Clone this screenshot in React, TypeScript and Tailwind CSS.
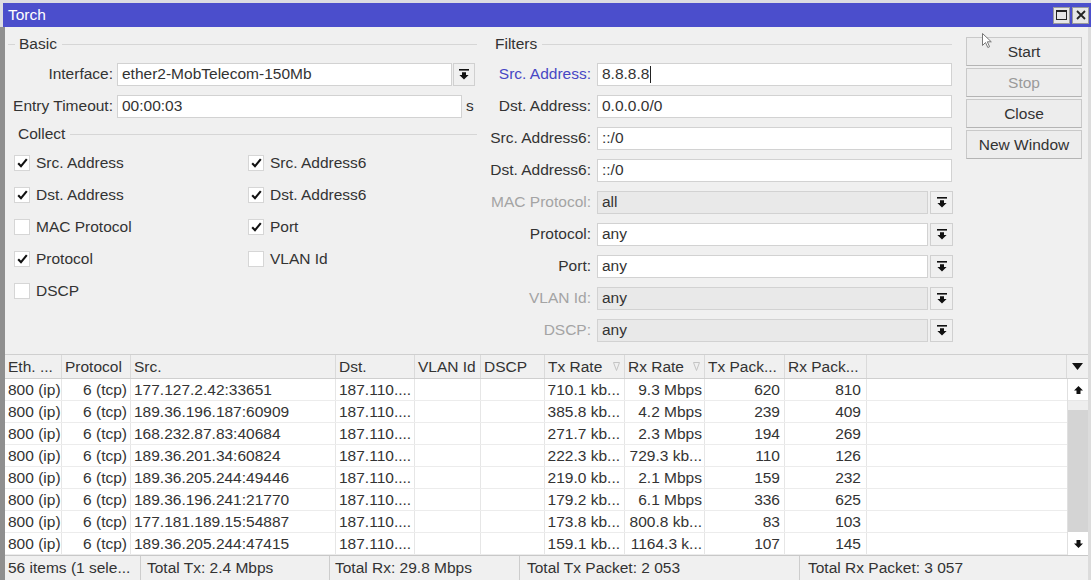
import React from "react";

const FONT = "font-['Liberation_Sans',Arial,sans-serif]";

function DropIcon() {
  return (
    <svg width="10" height="11" viewBox="0 0 10 11">
      <rect x="0" y="0" width="10" height="1.6" fill="#111" />
      <path d="M3 3.2h4v2.8h2.6L5 10.6 0.4 6H3z" fill="#111" />
    </svg>
  );
}

function DropBtn({ w }: { w: string }) {
  return (
    <div className={`${w} h-[23px] border border-[#d0d0d0] bg-[#f0f0f0] flex items-center justify-center`}>
      <DropIcon />
    </div>
  );
}

function Input({
  w,
  value,
  disabled,
  cursor,
}: {
  w: string;
  value: string;
  disabled?: boolean;
  cursor?: boolean;
}) {
  return (
    <div
      className={`${w} h-[23px] border border-[#d2d2d2] ${
        disabled ? "bg-[#e9e9e9]" : "bg-white"
      } flex items-center pl-[4px] whitespace-nowrap overflow-hidden`}
    >
      <span>{value}</span>
      {cursor && <span className="w-px h-[17px] bg-[#222] ml-[1px]" />}
    </div>
  );
}

function GroupTitle({ label, lead, pl, w }: { label: string; lead?: boolean; pl: string; w: string }) {
  return (
    <div className={`h-[20px] flex items-center ${pl} ${w}`}>
      {lead && <div className="w-[7px] h-px bg-[#d6d6d6] mr-[4px]" />}
      <span>{label}</span>
      <div className="flex-1 h-px bg-[#d6d6d6] ml-[5px]" />
    </div>
  );
}

function Check({ on }: { on: boolean }) {
  return (
    <div className="w-[16px] h-[16px] border border-[#d6d6d6] bg-white flex items-center justify-center">
      {on && (
        <svg width="11" height="10" viewBox="0 0 11 10">
          <path d="M1.2 5.2l2.8 3L9.8 1.2" stroke="#111" strokeWidth="2.1" fill="none" />
        </svg>
      )}
    </div>
  );
}

function CheckItem({ on, label }: { on: boolean; label: string }) {
  return (
    <div className="h-[32px] flex items-center">
      <Check on={on} />
      <span className="ml-[6px]">{label}</span>
    </div>
  );
}

type FRow = {
  label: string;
  value: string;
  kind: "input" | "drop";
  disabled?: boolean;
  blue?: boolean;
  cursor?: boolean;
};

const filterRows: FRow[] = [
  { label: "Src. Address:", value: "8.8.8.8", kind: "input", blue: true, cursor: true },
  { label: "Dst. Address:", value: "0.0.0.0/0", kind: "input" },
  { label: "Src. Address6:", value: "::/0", kind: "input" },
  { label: "Dst. Address6:", value: "::/0", kind: "input" },
  { label: "MAC Protocol:", value: "all", kind: "drop", disabled: true },
  { label: "Protocol:", value: "any", kind: "drop" },
  { label: "Port:", value: "any", kind: "drop" },
  { label: "VLAN Id:", value: "any", kind: "drop", disabled: true },
  { label: "DSCP:", value: "any", kind: "drop", disabled: true },
];

function Button({ label, disabled }: { label: string; disabled?: boolean }) {
  return (
    <div
      className={`w-[116px] h-[29px] border border-[#c9c9c9] border-b-[#b4b4b4] bg-[#ededed] flex items-center justify-center ${
        disabled ? "text-[#9a9a9a]" : "text-[#333]"
      }`}
    >
      {label}
    </div>
  );
}

const rows = [
  ["177.127.2.42:33651", "710.1 kb...", "9.3 Mbps", "620", "810"],
  ["189.36.196.187:60909", "385.8 kb...", "4.2 Mbps", "239", "409"],
  ["168.232.87.83:40684", "271.7 kb...", "2.3 Mbps", "194", "269"],
  ["189.36.201.34:60824", "222.3 kb...", "729.3 kb...", "110", "126"],
  ["189.36.205.244:49446", "219.0 kb...", "2.1 Mbps", "159", "232"],
  ["189.36.196.241:21770", "179.2 kb...", "6.1 Mbps", "336", "625"],
  ["177.181.189.15:54887", "173.8 kb...", "800.8 kb...", "83", "103"],
  ["189.36.205.244:47415", "159.1 kb...", "1164.3 k...", "107", "145"],
];

function SortMark() {
  return (
    <svg width="7" height="9" viewBox="0 0 7 9" className="ml-auto mr-[4px]">
      <path d="M0.5 0.5h6L3.5 8.5z" stroke="#c4c4c4" fill="none" strokeWidth="1" />
    </svg>
  );
}

function HCell({ w, children }: { w: string; children: React.ReactNode }) {
  return (
    <div className={`${w} h-full border-r border-[#dadada] flex items-center pl-[3px] whitespace-nowrap overflow-hidden`}>
      {children}
    </div>
  );
}

function Cell({ w, children, right, pr }: { w: string; children?: React.ReactNode; right?: boolean; pr?: string }) {
  return (
    <div
      className={`${w} h-full border-r border-[#e6e6e6] flex items-center whitespace-nowrap overflow-hidden ${
        right ? `justify-end ${pr ?? "pr-[3px]"}` : "pl-[3px]"
      }`}
    >
      {children}
    </div>
  );
}

export default function App() {
  return (
    <div className={`w-[1091px] h-[580px] bg-[#dcdce2] pt-[3px] flex flex-col overflow-hidden text-[15.5px] leading-none text-[#333] ${FONT}`}>
      {/* Title bar */}
      <div className="h-[24px] ml-[3px] bg-[#4b4ecc] flex items-center pl-[5px] pr-[2px]">
        <span className="text-white">Torch</span>
        <div className="ml-auto flex gap-[2px]">
          <div className="w-[17px] h-[17px] bg-[#e6e6e6] border border-[#9a9a9a] flex items-center justify-center">
            <div className="w-[11px] h-[10px] border border-[#222] border-t-[2px]" />
          </div>
          <div className="w-[17px] h-[17px] bg-[#e6e6e6] border border-[#9a9a9a] flex items-center justify-center">
            <svg width="10" height="10" viewBox="0 0 10 10">
              <path d="M1 1L9 9M9 1L1 9" stroke="#222" strokeWidth="1.8" />
            </svg>
          </div>
        </div>
      </div>

      {/* Body */}
      <div className="flex-1 flex flex-col bg-[#f0f0f0] border-l-[5px] border-l-[#8f8f8f] border-r-[3px] border-r-[#dcdcdc] relative">
        {/* Mouse pointer overlay */}
        <svg width="10" height="16" viewBox="0 0 10 16" className="absolute left-[977px] top-[6px]">
          <path d="M0.5 0.5V12.5L3.5 9.5L5.8 14.5L7.6 13.7L5.3 8.8H9.3Z" fill="white" stroke="#777" strokeWidth="1" />
        </svg>

        {/* Form area */}
        <div className="h-[327px] flex">
          {/* Left panel */}
          <div className="w-[473px] flex flex-col pt-[7px]">
            <GroupTitle label="Basic" lead pl="pl-[3px]" w="w-[472px]" />
            <div className="h-[32px] mt-[4px] flex items-center">
              <div className="w-[112px] text-right pr-[4px]">Interface:</div>
              <Input w="w-[335px]" value="ether2-MobTelecom-150Mb" />
              <div className="ml-[1px]">
                <DropBtn w="w-[22px]" />
              </div>
            </div>
            <div className="h-[32px] flex items-center">
              <div className="w-[112px] text-right pr-[4px] whitespace-nowrap">Entry Timeout:</div>
              <Input w="w-[345px]" value="00:00:03" />
              <span className="ml-[4px]">s</span>
            </div>
            <div className="mt-[2px]">
              <GroupTitle label="Collect" pl="pl-[13px]" w="w-[472px]" />
            </div>
            <div className="mt-[3px] flex">
              <div className="w-[243px] pl-[9px] flex flex-col">
                <CheckItem on label="Src. Address" />
                <CheckItem on label="Dst. Address" />
                <CheckItem on={false} label="MAC Protocol" />
                <CheckItem on label="Protocol" />
                <CheckItem on={false} label="DSCP" />
              </div>
              <div className="flex flex-col">
                <CheckItem on label="Src. Address6" />
                <CheckItem on label="Dst. Address6" />
                <CheckItem on label="Port" />
                <CheckItem on={false} label="VLAN Id" />
              </div>
            </div>
          </div>

          {/* Filters panel */}
          <div className="w-[471px] ml-[6px] flex flex-col pt-[7px]">
            <GroupTitle label="Filters" pl="pl-[11px]" w="w-[468px]" />
            <div className="mt-[4px] flex flex-col">
              {filterRows.map((r) => (
                <div key={r.label} className="h-[32px] flex items-center">
                  <div
                    className={`w-[113px] text-right pr-[6px] whitespace-nowrap ${
                      r.blue ? "text-[#4747c4]" : r.disabled ? "text-[#a4a4a4]" : "text-[#333]"
                    }`}
                  >
                    {r.label}
                  </div>
                  {r.kind === "input" ? (
                    <Input w="w-[355px]" value={r.value} cursor={r.cursor} />
                  ) : (
                    <>
                      <Input w="w-[331px]" value={r.value} disabled={r.disabled} />
                      <div className="ml-[2px]">
                        <DropBtn w="w-[23px]" />
                      </div>
                    </>
                  )}
                </div>
              ))}
            </div>
          </div>

          {/* Buttons */}
          <div className="ml-[11px] pt-[10px] flex flex-col gap-[2px]">
            <Button label="Start" />
            <Button label="Stop" disabled />
            <Button label="Close" />
            <Button label="New Window" />
          </div>
        </div>

        {/* Table header */}
        <div className="h-[25px] border-t border-b border-[#cfcfcf] bg-[#f0f0f0] flex">
          <HCell w="w-[57px]">Eth. ...</HCell>
          <HCell w="w-[69px]">Protocol</HCell>
          <HCell w="w-[205px]">Src.</HCell>
          <HCell w="w-[79px]">Dst.</HCell>
          <HCell w="w-[66px]">VLAN Id</HCell>
          <HCell w="w-[64px]">DSCP</HCell>
          <HCell w="w-[80px]">
            Tx Rate
            <SortMark />
          </HCell>
          <HCell w="w-[80px]">
            Rx Rate
            <SortMark />
          </HCell>
          <HCell w="w-[80px]">Tx Pack...</HCell>
          <HCell w="w-[82px]">Rx Pack...</HCell>
          <div className="w-[200px] h-full border-r border-[#dadada]" />
          <div className="w-[21px] h-full flex items-center justify-center">
            <svg width="11" height="7" viewBox="0 0 11 7">
              <path d="M0 0h11L5.5 7z" fill="#111" />
            </svg>
          </div>
        </div>

        {/* Table body */}
        <div className="h-[176px] flex">
          <div className="w-[1062px] flex flex-col bg-white">
            {rows.map((r, i) => (
              <div key={i} className="h-[22px] flex border-b border-[#ececec]">
                <Cell w="w-[57px]">800 (ip)</Cell>
                <Cell w="w-[69px]" right>
                  6 (tcp)
                </Cell>
                <Cell w="w-[205px]">{r[0]}</Cell>
                <Cell w="w-[79px]">187.110....</Cell>
                <Cell w="w-[66px]" />
                <Cell w="w-[64px]" />
                <Cell w="w-[80px]" right pr="pr-[4px]">
                  {r[1]}
                </Cell>
                <Cell w="w-[80px]" right pr="pr-[2px]">
                  {r[2]}
                </Cell>
                <Cell w="w-[80px]" right pr="pr-[4px]">
                  {r[3]}
                </Cell>
                <Cell w="w-[82px]" right pr="pr-[5px]">
                  {r[4]}
                </Cell>
                <div className="w-[200px] h-full" />
              </div>
            ))}
          </div>
          {/* Scrollbar */}
          <div className="w-[21px] flex flex-col border-l border-[#e0e0e0] bg-white">
            <div className="h-[22px] flex items-center justify-center border-b border-[#e6e6e6]">
              <svg width="9" height="8" viewBox="0 0 9 8">
                <path d="M4.5 0L9 4.5H6.5V8h-4V4.5H0z" fill="#111" />
              </svg>
            </div>
            <div className="h-[9px] bg-[#eeeeee]" />
            <div className="flex-1 bg-[#d4d4d4]" />
            <div className="h-[23px] flex items-center justify-center">
              <svg width="9" height="8" viewBox="0 0 9 8">
                <path d="M4.5 8L9 3.5H6.5V0h-4V3.5H0z" fill="#111" />
              </svg>
            </div>
          </div>
        </div>

        {/* Status bar */}
        <div className="h-[25px] flex border-t border-[#c8c8c8] bg-[#f0f0f0]">
          <div className="w-[136px] h-full border-r border-[#cdcdcd] flex items-center pl-[3px] whitespace-nowrap overflow-hidden">
            56 items (1 sele...
          </div>
          <div className="w-[189px] h-full border-r border-[#cdcdcd] flex items-center pl-[6px] whitespace-nowrap">
            Total Tx: 2.4 Mbps
          </div>
          <div className="w-[190px] h-full border-r border-[#cdcdcd] flex items-center pl-[5px] whitespace-nowrap">
            Total Rx: 29.8 Mbps
          </div>
          <div className="w-[280px] h-full border-r border-[#cdcdcd] flex items-center pl-[7px] whitespace-nowrap">
            Total Tx Packet: 2 053
          </div>
          <div className="flex-1 h-full flex items-center pl-[8px] whitespace-nowrap">
            Total Rx Packet: 3 057
          </div>
        </div>
      </div>
    </div>
  );
}
